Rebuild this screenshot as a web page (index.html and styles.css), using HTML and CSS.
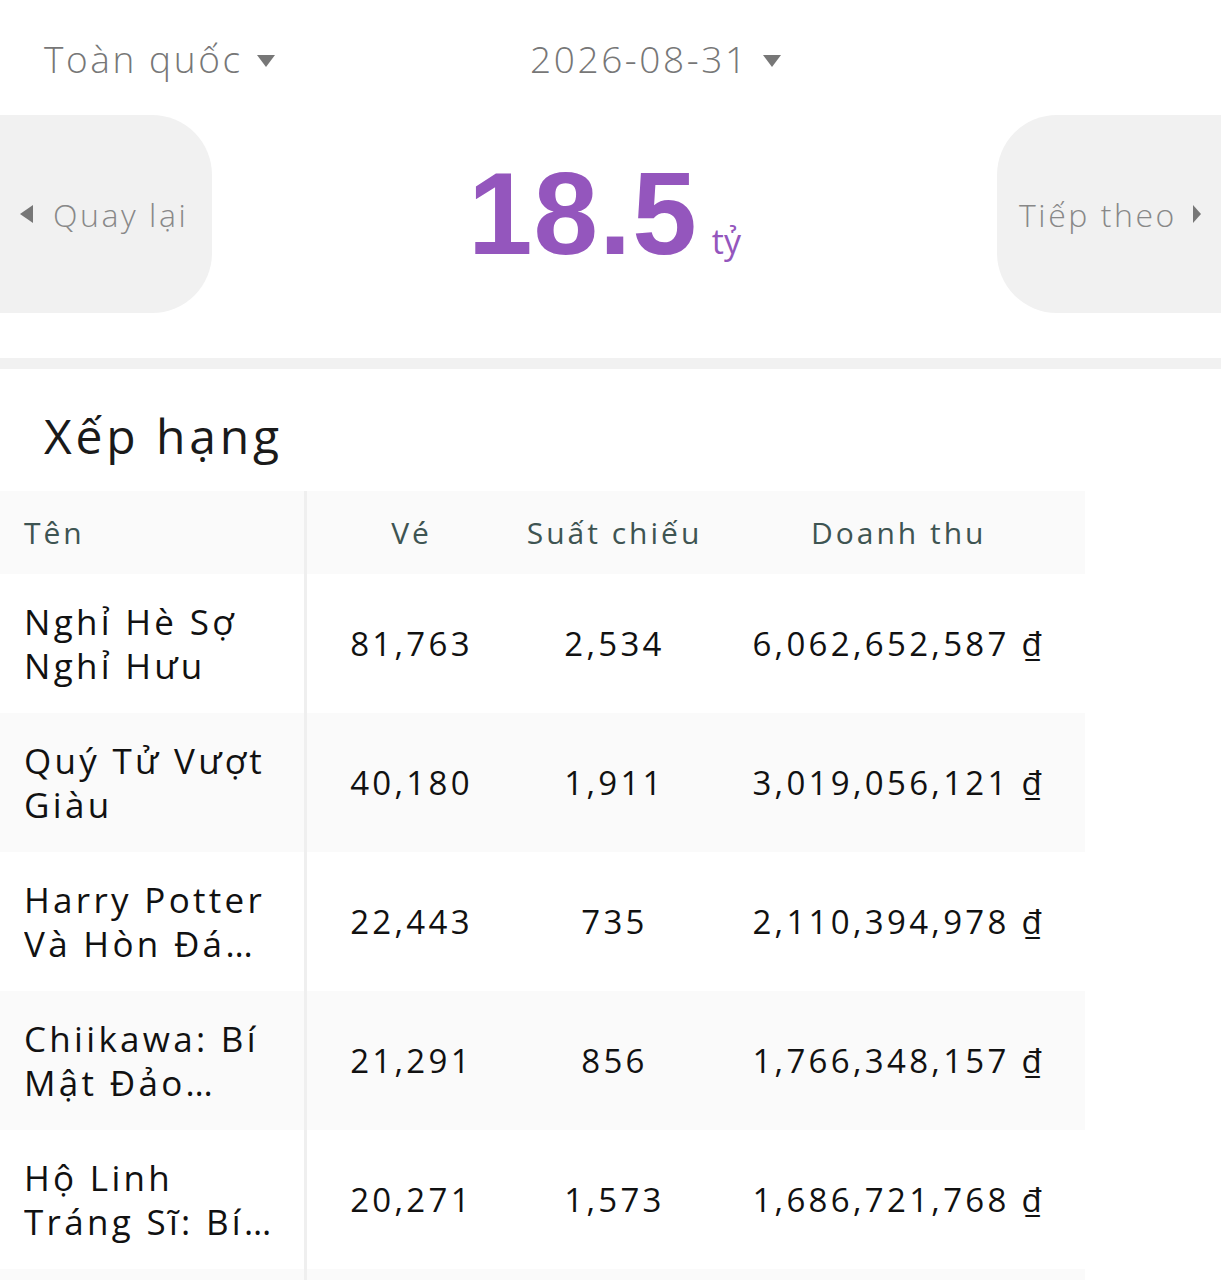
FILE: index.html
```html
<!DOCTYPE html>
<html lang="vi">
<head>
    <meta charset="UTF-8">
    <meta name="viewport" content="width=device-width, initial-scale=1.0">
    <title>Doanh thu phòng vé</title>
    <link rel="stylesheet" href="styles.css">
</head>
<body>
    <div class="filters">
        <div class="filter region">Toàn quốc <span class="caret"></span></div>
        <div class="filter date">2026-08-31 <span class="caret"></span></div>
    </div>
    <div class="total-bar">
        <button class="nav-btn prev"><span class="tri tri-left"></span>Quay lại</button>
        <div class="total"><span class="amount">18.5</span><span class="unit">tỷ</span></div>
        <button class="nav-btn next">Tiếp theo<span class="tri tri-right"></span></button>
    </div>
    <div class="divider"></div>
    <h2>Xếp hạng</h2>
    <table class="ranking">
        <thead>
            <tr>
                <th class="name">Tên</th>
                <th>Vé</th>
                <th>Suất chiếu</th>
                <th>Doanh thu</th>
            </tr>
        </thead>
        <tbody>
            <tr>
                <td class="name"><div class="clamp">Nghỉ Hè Sợ Nghỉ Hưu</div></td>
                <td>81,763</td>
                <td>2,534</td>
                <td>6,062,652,587 ₫</td>
            </tr>
            <tr>
                <td class="name"><div class="clamp">Quý Tử Vượt Giàu</div></td>
                <td>40,180</td>
                <td>1,911</td>
                <td>3,019,056,121 ₫</td>
            </tr>
            <tr>
                <td class="name"><div class="clamp">Harry Potter Và Hòn Đá Phù Thủy</div></td>
                <td>22,443</td>
                <td>735</td>
                <td>2,110,394,978 ₫</td>
            </tr>
            <tr>
                <td class="name"><div class="clamp">Chiikawa: Bí Mật Đảo Người Cá</div></td>
                <td>21,291</td>
                <td>856</td>
                <td>1,766,348,157 ₫</td>
            </tr>
            <tr>
                <td class="name"><div class="clamp">Hộ Linh Tráng Sĩ: Bí Mật Ngôi Mộ</div></td>
                <td>20,271</td>
                <td>1,573</td>
                <td>1,686,721,768 ₫</td>
            </tr>
            <tr>
                <td class="name"><div class="clamp">Phim Điện Ảnh Mới</div></td>
                <td>18,402</td>
                <td>1,220</td>
                <td>1,402,117,530 ₫</td>
            </tr>
        </tbody>
    </table>
</body>
</html>
```

FILE: styles.css
```css
body {
    font-family: "Open Sans", "Noto Sans", sans-serif;
    margin: 0;
    padding: 0;
    background: #fff;
    color: #111;
    letter-spacing: 0.09em;
    overflow: hidden;
}
.filters {
    display: flex;
    height: 115px;
    align-items: flex-start;
    padding-top: 33px;
    box-sizing: border-box;
    color: #777;
    font-size: 37px;
    font-weight: 300;
    letter-spacing: 0.07em;
}
.filter {
    display: flex;
    align-items: center;
    gap: 14px;
}
.region {
    padding-left: 44px;
    width: 486px;
}
.caret {
    width: 0;
    height: 0;
    border-left: 9px solid transparent;
    border-right: 9px solid transparent;
    border-top: 12px solid #777;
    margin-top: 4px;
}
.total-bar {
    display: flex;
    align-items: center;
    justify-content: space-between;
    height: 198px;
}
.nav-btn {
    height: 198px;
    border: none;
    background: #f1f1f1;
    color: #888;
    font-family: inherit;
    font-size: 32px;
    font-weight: 300;
    letter-spacing: 0.08em;
    display: flex;
    align-items: center;
    gap: 20px;
}
.prev {
    width: 212px;
    border-radius: 0 60px 60px 0;
    padding-left: 20px;
}
.next {
    width: 224px;
    border-radius: 60px 0 0 60px;
    padding-left: 22px;
    gap: 16px;
}
.tri {
    width: 0;
    height: 0;
    border-top: 9px solid transparent;
    border-bottom: 9px solid transparent;
}
.tri-left {
    border-right: 13px solid #777;
}
.tri-right {
    border-left: 8px solid #777;
}
.total {
    color: #9456bd;
    display: flex;
    align-items: baseline;
    letter-spacing: 0;
}
.amount {
    font-family: "Liberation Sans", Arial, sans-serif;
    font-weight: bold;
    font-size: 116px;
    letter-spacing: 1px;
}
.unit {
    font-size: 34px;
    margin-left: 14px;
}
.divider {
    height: 11px;
    background: #f1f1f1;
    margin-top: 45px;
}
h2 {
    font-weight: 400;
    font-size: 48px;
    letter-spacing: 0.08em;
    color: #1a1a1a;
    margin: 0;
    padding: 34px 0 0 44px;
    box-sizing: border-box;
    height: 122px;
}
.ranking {
    border-collapse: collapse;
    width: 1085px;
    table-layout: fixed;
}
.ranking th {
    height: 83px;
    background: #fafafa;
    color: #3e5452;
    font-weight: 400;
    font-size: 30px;
    letter-spacing: 0.1em;
    text-align: center;
    padding: 0;
}
.ranking th:nth-child(1) { width: 305px; }
.ranking th:nth-child(2) { width: 210px; }
.ranking th:nth-child(3) { width: 196px; }
.ranking td {
    height: 139px;
    padding: 0;
    text-align: center;
    font-size: 33px;
    letter-spacing: 0.1em;
    color: #111;
}
.ranking .name {
    text-align: left;
    padding-left: 24px;
    border-right: 3px solid #efefef;
    box-sizing: border-box;
}
.ranking tbody tr:nth-child(even) td {
    background: #fafafa;
}
.ranking tbody tr:nth-child(odd) td.name {
    background: #fff;
}
.clamp {
    display: -webkit-box;
    -webkit-line-clamp: 2;
    -webkit-box-orient: vertical;
    overflow: hidden;
    font-size: 35px;
    line-height: 44px;
    padding-right: 16px;
}
```
